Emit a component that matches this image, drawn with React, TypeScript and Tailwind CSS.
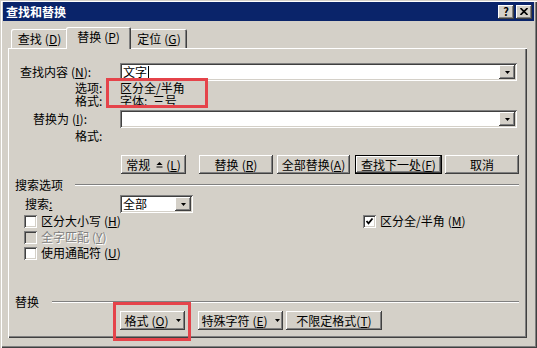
import React from "react";

const BTN =
  "shadow-[inset_-1px_-1px_#404040,inset_1px_1px_#ffffff,inset_-2px_-2px_#808080]";
const DEFBTN =
  "shadow-[inset_0_0_0_1px_#000000,inset_-2px_-2px_#404040,inset_2px_2px_#ffffff,inset_-3px_-3px_#808080]";
const SUNK =
  "shadow-[inset_1px_1px_#808080,inset_-1px_-1px_#ffffff,inset_2px_2px_#404040,inset_-2px_-2px_#d4d0c8]";

function Acc({ k, gap = true }: { k: string; gap?: boolean }) {
  return (
    <span className={gap ? "ml-[3px]" : ""}>
      (<span className="underline underline-offset-[1px]">{k}</span>)
    </span>
  );
}

function Arrow() {
  return (
    <svg width="5" height="3" viewBox="0 0 5 3">
      <polygon points="0,0 5,0 2.5,3" fill="#000" />
    </svg>
  );
}

function ComboBtn() {
  return (
    <div
      className={`ml-auto mr-[2px] flex h-[14px] w-[16px] items-center justify-center bg-[#d4d0c8] ${BTN}`}
    >
      <Arrow />
    </div>
  );
}

function Button({
  className,
  children,
  def,
}: {
  className: string;
  children: React.ReactNode;
  def?: boolean;
}) {
  return (
    <div
      className={`flex h-[19px] items-center justify-center bg-[#d4d0c8] ${
        def ? DEFBTN : BTN
      } ${className}`}
    >
      {children}
    </div>
  );
}

function Check({
  checked,
  disabled,
}: {
  checked?: boolean;
  disabled?: boolean;
}) {
  return (
    <div
      className={`flex h-[13px] w-[13px] shrink-0 items-center justify-center ${
        disabled ? "bg-[#d4d0c8]" : "bg-white"
      } ${SUNK}`}
    >
      {checked && (
        <svg width="9" height="9" viewBox="0 0 9 9">
          <polyline
            points="1.5,4 3.5,6.3 7.5,1.5"
            fill="none"
            stroke="#000"
            strokeWidth="1.8"
          />
        </svg>
      )}
    </div>
  );
}

function Etched({ className }: { className: string }) {
  return (
    <div
      className={`h-[2px] flex-1 border-t border-b border-t-[#808080] border-b-white ${className}`}
    />
  );
}

export default function App() {
  return (
    <div className="relative h-[348px] w-[537px] overflow-hidden bg-[#d4d0c8] font-['Noto_Sans_CJK_SC',sans-serif] text-[12px] leading-[12px] text-black shadow-[inset_1px_1px_#d4d0c8,inset_2px_2px_#ffffff,inset_-1px_-1px_#404040,inset_-2px_-2px_#808080]">
      <div className="flex flex-col pl-[3px] pr-[3px] pt-[2px]">
        {/* Title bar */}
        <div className="flex h-[19px] items-center bg-[#0a246a] pl-[3px]">
          <span className="font-bold text-white">查找和替换</span>
          <div className="ml-auto mr-[2px] flex gap-[2px]">
            <div
              className={`flex h-[14px] w-[16px] items-center justify-center bg-[#d4d0c8] text-[11px] font-bold leading-[11px] ${BTN}`}
            >
              ?
            </div>
            <div
              className={`flex h-[14px] w-[16px] items-center justify-center bg-[#d4d0c8] ${BTN}`}
            >
              <svg width="8" height="7" viewBox="0 0 8 7">
                <path d="M0.5 0 L7.5 7 M7.5 0 L0.5 7" stroke="#000" strokeWidth="1.6" />
              </svg>
            </div>
          </div>
        </div>

        {/* Tabs */}
        <div className="ml-[8px] mt-[6px] flex h-[21px] items-end">
          <div className="flex h-[19px] w-[57px] items-center justify-center rounded-t-[2px] bg-[#d4d0c8] shadow-[inset_1px_1px_#ffffff,inset_-1px_0_#404040,inset_-2px_0_#808080]">
            查找<Acc k="D" />
          </div>
          <div className="relative z-10 -mb-[1px] ml-[-2px] flex h-[22px] w-[65px] items-center justify-center rounded-t-[2px] bg-[#d4d0c8] pb-[2px] shadow-[inset_1px_1px_#ffffff,inset_-1px_0_#404040,inset_-2px_0_#808080]">
            替换<Acc k="P" />
          </div>
          <div className="ml-[-2px] flex h-[19px] w-[58px] items-center justify-center rounded-t-[2px] bg-[#d4d0c8] pl-[2px] shadow-[inset_1px_1px_#ffffff,inset_-1px_0_#404040,inset_-2px_0_#808080]">
            定位<Acc k="G" />
          </div>
        </div>

        {/* Panel */}
        <div className="ml-[5px] h-[290px] w-[519px] shadow-[inset_1px_1px_#ffffff,inset_-1px_-1px_#404040,inset_-2px_-2px_#808080]">
          <div className="flex flex-col pt-[15px]">
            <div className="flex h-[18px] items-center">
              <div className="w-[112px] pl-[12px]">
                查找内容<Acc k="N" />:
              </div>
              <div className={`flex h-[18px] w-[397px] items-center bg-white pl-[3px] ${SUNK}`}>
                <span>文字</span>
                <span className="ml-[1px] h-[13px] w-[1px] bg-black" />
                <ComboBtn />
              </div>
            </div>
            <div className="flex h-[26px] items-center leading-[13px]">
              <div className="w-[112px] pl-[67px]">
                选项:
                <br />
                格式:
              </div>
              <div>
                区分全/半角
                <br />
                字体:&nbsp;&nbsp;三号
              </div>
            </div>
            <div className="mt-[3px] flex h-[18px] items-center">
              <div className="w-[112px] pl-[25px]">
                替换为<Acc k="I" />:
              </div>
              <div className={`flex h-[18px] w-[397px] items-center bg-white pl-[3px] ${SUNK}`}>
                <ComboBtn />
              </div>
            </div>
            <div className="mt-[1px] flex h-[13px] items-center">
              <div className="pl-[67px]">格式:</div>
            </div>

            {/* Buttons */}
            <div className="mt-[13px] flex h-[19px] pl-[113px]">
              <Button className="w-[65px]">
                常规
                <svg className="ml-[6px]" width="7" height="7" viewBox="0 0 7 7">
                  <polygon points="0.5,4 3.5,1 6.5,4" fill="#000" />
                  <rect x="0.5" y="5.5" width="6" height="1" fill="#000" />
                </svg>
                <Acc k="L" />
              </Button>
              <Button className="ml-[13px] w-[74px]">
                替换<Acc k="R" />
              </Button>
              <Button className="ml-[4px] w-[73px]">
                全部替换<Acc k="A" gap={false} />
              </Button>
              <Button def className="ml-[5px] w-[87px]">
                查找下一处<Acc k="F" gap={false} />
              </Button>
              <Button className="ml-[3px] w-[74px]">取消</Button>
            </div>

            {/* Search options */}
            <div className="mt-[5px] flex h-[12px] items-center pl-[7px] pr-[8px]">
              <span>搜索选项</span>
              <Etched className="ml-[12px]" />
            </div>
            <div className="mt-[4px] flex h-[18px] items-center">
              <div className="w-[112px] pl-[17px]">
                搜索<span className="underline underline-offset-[1px]">:</span>
              </div>
              <div className={`flex h-[18px] w-[73px] items-center bg-white pl-[3px] ${SUNK}`}>
                <span>全部</span>
                <ComboBtn />
              </div>
            </div>
            <div className="flex h-[16px] items-center">
              <div className="flex w-[355px] items-center pl-[16px]">
                <Check />
                <span className="ml-[4px]">
                  区分大小写<Acc k="H" />
                </span>
              </div>
              <Check checked />
              <span className="ml-[4px]">
                区分全/半角<Acc k="M" />
              </span>
            </div>
            <div className="flex h-[16px] items-center pl-[16px]">
              <Check disabled />
              <span className="ml-[4px] text-[#808080] [text-shadow:1px_1px_0_#ffffff]">
                全字匹配<Acc k="Y" />
              </span>
            </div>
            <div className="flex h-[16px] items-center pl-[16px]">
              <Check />
              <span className="ml-[4px]">
                使用通配符<Acc k="U" />
              </span>
            </div>

            {/* Replace group */}
            <div className="mt-[35px] flex h-[12px] items-center pl-[7px] pr-[8px]">
              <span>替换</span>
              <Etched className="ml-[13px]" />
            </div>
            <div className="mt-[3px] flex h-[19px] pl-[112px]">
              <Button className="w-[65px]">
                格式<Acc k="O" />
                <span className="ml-[7px] flex">
                  <Arrow />
                </span>
              </Button>
              <Button className="ml-[13px] w-[85px]">
                特殊字符<Acc k="E" />
                <span className="ml-[7px] flex">
                  <Arrow />
                </span>
              </Button>
              <Button className="ml-[3px] w-[96px]">
                不限定格式<Acc k="T" gap={false} />
              </Button>
            </div>
          </div>
        </div>
      </div>

      {/* Annotation boxes */}
      <div className="absolute left-[106px] top-[78px] h-[30px] w-[102px] border-[3px] border-[#e5434a]" />
      <div className="absolute left-[113px] top-[302px] h-[39px] w-[78px] border-[3px] border-[#e5434a]" />
    </div>
  );
}
